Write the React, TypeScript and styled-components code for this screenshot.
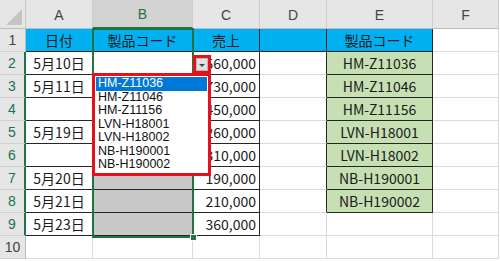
import styled, { createGlobalStyle } from "styled-components";

const GlobalStyle = createGlobalStyle`
  html, body { margin: 0; padding: 0; background: #fff; }
  body { font-family: "Noto Sans CJK JP", "Noto Sans", sans-serif; }
`;

const GREEN = "#217346";
const GRID = "#DADADA";
const DARK = "#262626";
const RED = "#E8101A";

const Sheet = styled.div`
  position: relative;
  display: grid;
  grid-template-columns: 26px 67px 100px 67px 67px 106px 66px;
  grid-template-rows: 29px repeat(10, 23px);
  width: 499px;
  overflow: hidden;
`;

const Corner = styled.div`
  position: relative;
  background: #e6e6e6;
  border-right: 1px solid #c6c6c6;
  border-bottom: 1px solid #bdbdbd;
  box-sizing: border-box;
  &::after {
    content: "";
    position: absolute;
    right: 3px;
    bottom: 3px;
    border-left: 16px solid transparent;
    border-bottom: 16px solid #c4c4c4;
  }
`;

const ColHead = styled.div<{ $active?: boolean }>`
  box-sizing: border-box;
  display: flex;
  align-items: center;
  justify-content: center;
  padding-top: 1px;
  background: ${(p) => (p.$active ? "#d3d3d3" : "#e6e6e6")};
  border-right: 1px solid #cdcdcd;
  border-bottom: ${(p) => (p.$active ? `2px solid ${GREEN}` : "1px solid #bdbdbd")};
  color: ${(p) => (p.$active ? GREEN : "#444")};
  font-family: "Liberation Sans", sans-serif;
  font-size: 14px;
`;

const RowHead = styled.div<{ $active?: boolean }>`
  box-sizing: border-box;
  display: flex;
  align-items: center;
  justify-content: center;
  background: #e6e6e6;
  border-bottom: 1px solid #d0d0d0;
  border-right: ${(p) => (p.$active ? `2px solid ${GREEN}` : "1px solid #bdbdbd")};
  color: ${(p) => (p.$active ? GREEN : "#444")};
  font-family: "Liberation Sans", sans-serif;
  font-size: 14px;
`;

const Cell = styled.div<{ $fill?: string; $r?: boolean; $b?: boolean; $align?: string }>`
  box-sizing: border-box;
  display: flex;
  align-items: center;
  justify-content: ${(p) => p.$align || "center"};
  padding: 0 3px;
  background: ${(p) => p.$fill || "#fff"};
  border-right: 1px solid ${(p) => (p.$r ? DARK : GRID)};
  border-bottom: 1px solid ${(p) => (p.$b ? DARK : GRID)};
  color: #1a1a1a;
  font-size: 14px;
  white-space: nowrap;
  overflow: hidden;
`;

const Selection = styled.div`
  position: absolute;
  left: 92px;
  top: 28px;
  width: 102px;
  height: 210px;
  box-sizing: border-box;
  border: 2px solid ${GREEN};
  pointer-events: none;
  &::after {
    content: "";
    position: absolute;
    right: -5px;
    bottom: -5px;
    width: 5px;
    height: 5px;
    background: ${GREEN};
    border: 1px solid #fff;
  }
`;

const DropButton = styled.div`
  position: absolute;
  left: 193px;
  top: 55px;
  width: 18px;
  height: 19px;
  box-sizing: border-box;
  border: 3px solid ${RED};
  background: #fff;
  display: flex;
  align-items: center;
  justify-content: center;
`;

const ButtonFace = styled.div`
  width: 12px;
  height: 13px;
  box-sizing: border-box;
  background: #e1e1e1;
  border: 1px solid #b9b9b9;
  display: flex;
  align-items: center;
  justify-content: center;
  &::before {
    content: "";
    border-left: 3px solid transparent;
    border-right: 3px solid transparent;
    border-top: 3px solid #444;
    margin-top: 1px;
  }
`;

const DropList = styled.div`
  position: absolute;
  left: 92px;
  top: 73px;
  width: 119px;
  height: 103px;
  box-sizing: border-box;
  border: 3px solid ${RED};
  background: #fff;
  padding: 1px 1px;
  display: flex;
  flex-direction: column;
`;

const Item = styled.div<{ $selected?: boolean }>`
  height: 13.6px;
  line-height: 13.6px;
  padding-left: 2px;
  overflow: hidden;
  font-family: "Liberation Sans", sans-serif;
  font-size: 12.5px;
  background: ${(p) => (p.$selected ? "#0078d7" : "transparent")};
  color: ${(p) => (p.$selected ? "#fff" : "#111")};
`;

const CYAN = "#00b0f0";
const LIGHTGREEN = "#c6e0b4";
const GRAY = "#c8c8c8";

const dates = ["5月10日", "5月11日", "", "5月19日", "", "5月20日", "5月21日", "5月23日"];
const sales = ["560,000", "730,000", "450,000", "260,000", "310,000", "190,000", "210,000", "360,000"];
const codes = ["HM-Z11036", "HM-Z11046", "HM-Z11156", "LVN-H18001", "LVN-H18002", "NB-H190001", "NB-H190002"];

export default function App() {
  return (
    <>
      <GlobalStyle />
      <Sheet>
        <Corner />
        <ColHead>A</ColHead>
        <ColHead $active>B</ColHead>
        <ColHead>C</ColHead>
        <ColHead>D</ColHead>
        <ColHead>E</ColHead>
        <ColHead>F</ColHead>

        <RowHead>1</RowHead>
        <Cell $fill={CYAN} $r $b>日付</Cell>
        <Cell $fill={CYAN} $r $b>製品コード</Cell>
        <Cell $fill={CYAN} $r $b>売上</Cell>
        <Cell $fill={CYAN} $r $b />
        <Cell $fill={CYAN} $r $b>製品コード</Cell>
        <Cell />

        {dates.map((d, i) => (
          <Row key={i} n={i + 2} date={d} sale={sales[i]} code={codes[i]} />
        ))}

        <RowHead>10</RowHead>
        <Cell />
        <Cell />
        <Cell />
        <Cell />
        <Cell />
        <Cell />

        <Selection />
        <DropButton>
          <ButtonFace />
        </DropButton>
        <DropList>
          {codes.map((c, i) => (
            <Item key={c} $selected={i === 0}>{c}</Item>
          ))}
        </DropList>
      </Sheet>
    </>
  );
}

function Row({ n, date, sale, code }: { n: number; date: string; sale: string; code?: string }) {
  const first = n === 2;
  return (
    <>
      <RowHead $active>{n}</RowHead>
      <Cell $r $b>{date}</Cell>
      <Cell $r $b $fill={first ? "#fff" : GRAY} />
      <Cell $r $b $align="flex-end">{sale}</Cell>
      <Cell $r={!!code} />
      <Cell $fill={code ? LIGHTGREEN : "#fff"} $r={!!code} $b={!!code}>{code}</Cell>
      <Cell />
    </>
  );
}
